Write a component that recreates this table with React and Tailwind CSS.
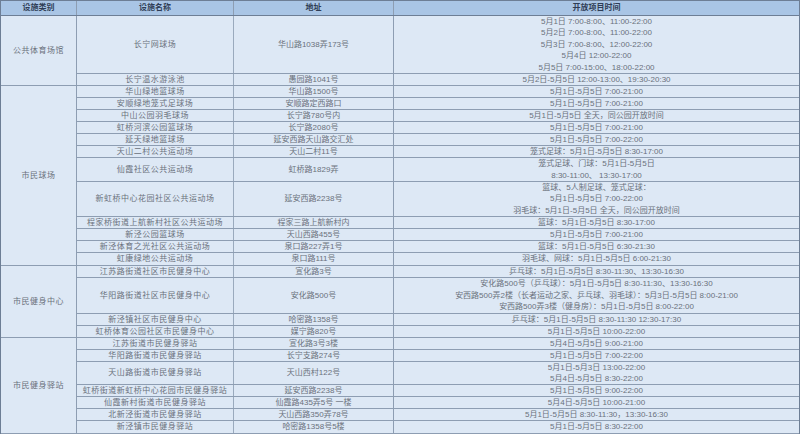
const groups = [
	{
		cat: "公共体育场馆",
		rows: [
			{
				name: "长宁网球场",
				addr: "华山路1038弄173号",
				time: [
					"5月1日 7:00-8:00、11:00-22:00",
					"5月2日 7:00-8:00、11:00-22:00",
					"5月3日 7:00-8:00、12:00-22:00",
					"5月4日 12:00-22:00",
					"5月5日 7:00-15:00、18:00-22:00",
				],
				h: "h-[58px]",
			},
			{ name: "长宁温水游泳池", addr: "愚园路1041号", time: ["5月2日-5月5日 12:00-13:00、19:30-20:30"], h: "h-[12px]" },
		],
	},
	{
		cat: "市民球场",
		rows: [
			{ name: "华山绿地篮球场", addr: "华山路1500号", time: ["5月1日-5月5日 7:00-21:00"], h: "h-[12px]" },
			{ name: "安顺绿地笼式足球场", addr: "安顺路定西路口", time: ["5月1日-5月5日 7:00-21:00"], h: "h-[12px]" },
			{ name: "中山公园羽毛球场", addr: "长宁路780号内", time: ["5月1日-5月5日 全天，同公园开放时间"], h: "h-[12px]" },
			{ name: "虹桥河滨公园篮球场", addr: "长宁路2080号", time: ["5月1日-5月5日 7:00-21:00"], h: "h-[12px]" },
			{ name: "延天绿地篮球场", addr: "延安西路天山路交汇处", time: ["5月1日-5月5日 7:00-22:00"], h: "h-[12px]" },
			{ name: "天山二村公共运动场", addr: "天山二村11号", time: ["笼式足球：5月1日-5月5日 8:30-17:00"], h: "h-[12px]" },
			{
				name: "仙霞社区公共运动场",
				addr: "虹桥路1829弄",
				time: ["笼式足球、门球：5月1日-5月5日", "8:30-11:00、 13:30-17:00"],
				h: "h-[24px]",
			},
			{
				name: "新虹桥中心花园社区公共运动场",
				addr: "延安西路2238号",
				time: ["篮球、5人制足球、笼式足球：", "5月1日-5月5日 7:00-22:00", "羽毛球：5月1日-5月5日 全天，同公园开放时间"],
				h: "h-[35px]",
			},
			{ name: "程家桥街道上航新村社区公共运动场", addr: "程家三路上航新村内", time: ["篮球：5月1日-5月5日 8:30-17:00"], h: "h-[12px]" },
			{ name: "新泾公园篮球场", addr: "天山西路455号", time: ["5月1日-5月5日 7:00-21:00"], h: "h-[12px]" },
			{ name: "新泾体育之光社区公共运动场", addr: "泉口路227弄1号", time: ["篮球：5月1日-5月5日 6:30-21:30"], h: "h-[12px]" },
			{ name: "虹康绿地公共运动场", addr: "泉口路111号", time: ["羽毛球、网球：5月1日-5月5日 6:00-21:30"], h: "h-[13px]" },
		],
	},
	{
		cat: "市民健身中心",
		rows: [
			{ name: "江苏路街道社区市民健身中心", addr: "宣化路3号", time: ["乒乓球：5月1日-5月5日 8:30-11:30、13:30-16:30"], h: "h-[12px]" },
			{
				name: "华阳路街道社区市民健身中心",
				addr: "安化路500号",
				time: [
					"安化路500号（乒乓球）：5月1日-5月5日 8:30-11:30、13:30-16:30",
					"安西路500弄2楼（长者运动之家、乒乓球、羽毛球）：5月3日-5月5日 8:00-21:00",
					"安西路500弄3楼（健身房）：5月1日-5月5日 8:00-22:00",
				],
				h: "h-[36px]",
			},
			{ name: "新泾镇社区市民健身中心", addr: "哈密路1358号", time: ["乒乓球：5月1日-5月5日 8:30-11:30 12:30-17:30"], h: "h-[12px]" },
			{ name: "虹桥体育公园社区市民健身中心", addr: "媒宁路820号", time: ["5月1日-5月5日 10:00-22:00"], h: "h-[12px]" },
		],
	},
	{
		cat: "市民健身驿站",
		rows: [
			{ name: "江苏街道市民健身驿站", addr: "宣化路3号3楼", time: ["5月4日-5月5日 9:00-21:00"], h: "h-[12px]" },
			{ name: "华阳路街道市民健身驿站", addr: "长宁支路274号", time: ["5月1日-5月5日 7:00-22:00"], h: "h-[12px]" },
			{
				name: "天山路街道市民健身驿站",
				addr: "天山西村122号",
				time: ["5月1日-5月3日 13:00-22:00", "5月4日-5月5日 8:30-22:00"],
				h: "h-[23px]",
			},
			{ name: "虹桥街道新虹桥中心花园市民健身驿站", addr: "延安西路2238号", time: ["5月1日-5月5日 9:00-22:00"], h: "h-[12px]" },
			{ name: "仙霞新村街道市民健身驿站", addr: "仙霞路435弄5号 一楼", time: ["5月4日-5月5日 10:00-21:00"], h: "h-[12px]" },
			{ name: "北新泾街道市民健身驿站", addr: "天山西路350弄78号", time: ["5月1日-5月5日 8:30-11:30，13:30-16:30"], h: "h-[12px]" },
			{ name: "新泾镇市民健身驿站", addr: "哈密路1358号5楼", time: ["5月1日-5月5日 8:30-22:00"], h: "h-[13px]" },
		],
	},
];

const Row = ({ row }) => (
	<div className={`flex border-b border-[#8d9db2] ${row.h}`}>
		<div className="w-[157px] shrink-0 border-r border-[#9aaabd] flex items-center justify-center tracking-[0.5px]">{row.name}</div>
		<div className="w-[160px] shrink-0 border-r border-[#8d9db2] flex items-center justify-center">{row.addr}</div>
		<div className="flex-1 flex flex-col items-center justify-center">
			{row.time.map((t, i) => (
				<div key={i} className="whitespace-pre">
					{t}
				</div>
			))}
		</div>
	</div>
);

export default function App() {
	return (
		<div
			className="w-[800px] h-[434px] bg-[#eef3f9] text-[8px] leading-[11.4px] text-[#6a717c]"
			style={{ fontFamily: '"Liberation Sans", "Noto Sans CJK SC", sans-serif' }}
		>
			<div className="border-t border-l border-r border-[#6d7e95] bg-[#dde8f5]">
				{/* header */}
				<div className="flex h-[15px] bg-[#a9c5e5] border-b border-[#6d7e95] font-bold text-[#2f3d55]">
					<div className="w-[76px] shrink-0 border-r border-[#8d9db2] flex items-center justify-center">设施类别</div>
					<div className="w-[157px] shrink-0 border-r border-[#8d9db2] flex items-center justify-center">设施名称</div>
					<div className="w-[160px] shrink-0 border-r border-[#8d9db2] flex items-center justify-center">地址</div>
					<div className="flex-1 flex items-center justify-center">开放项目时间</div>
				</div>

				{groups.map((g) => (
					<div key={g.cat} className="flex">
						<div className="w-[76px] shrink-0 border-r border-b border-[#8d9db2] flex items-center justify-center tracking-[0.5px]">
							{g.cat}
						</div>
						<div className="flex-1 flex flex-col">
							{g.rows.map((r) => (
								<Row key={r.name} row={r} />
							))}
						</div>
					</div>
				))}
			</div>
		</div>
	);
}
